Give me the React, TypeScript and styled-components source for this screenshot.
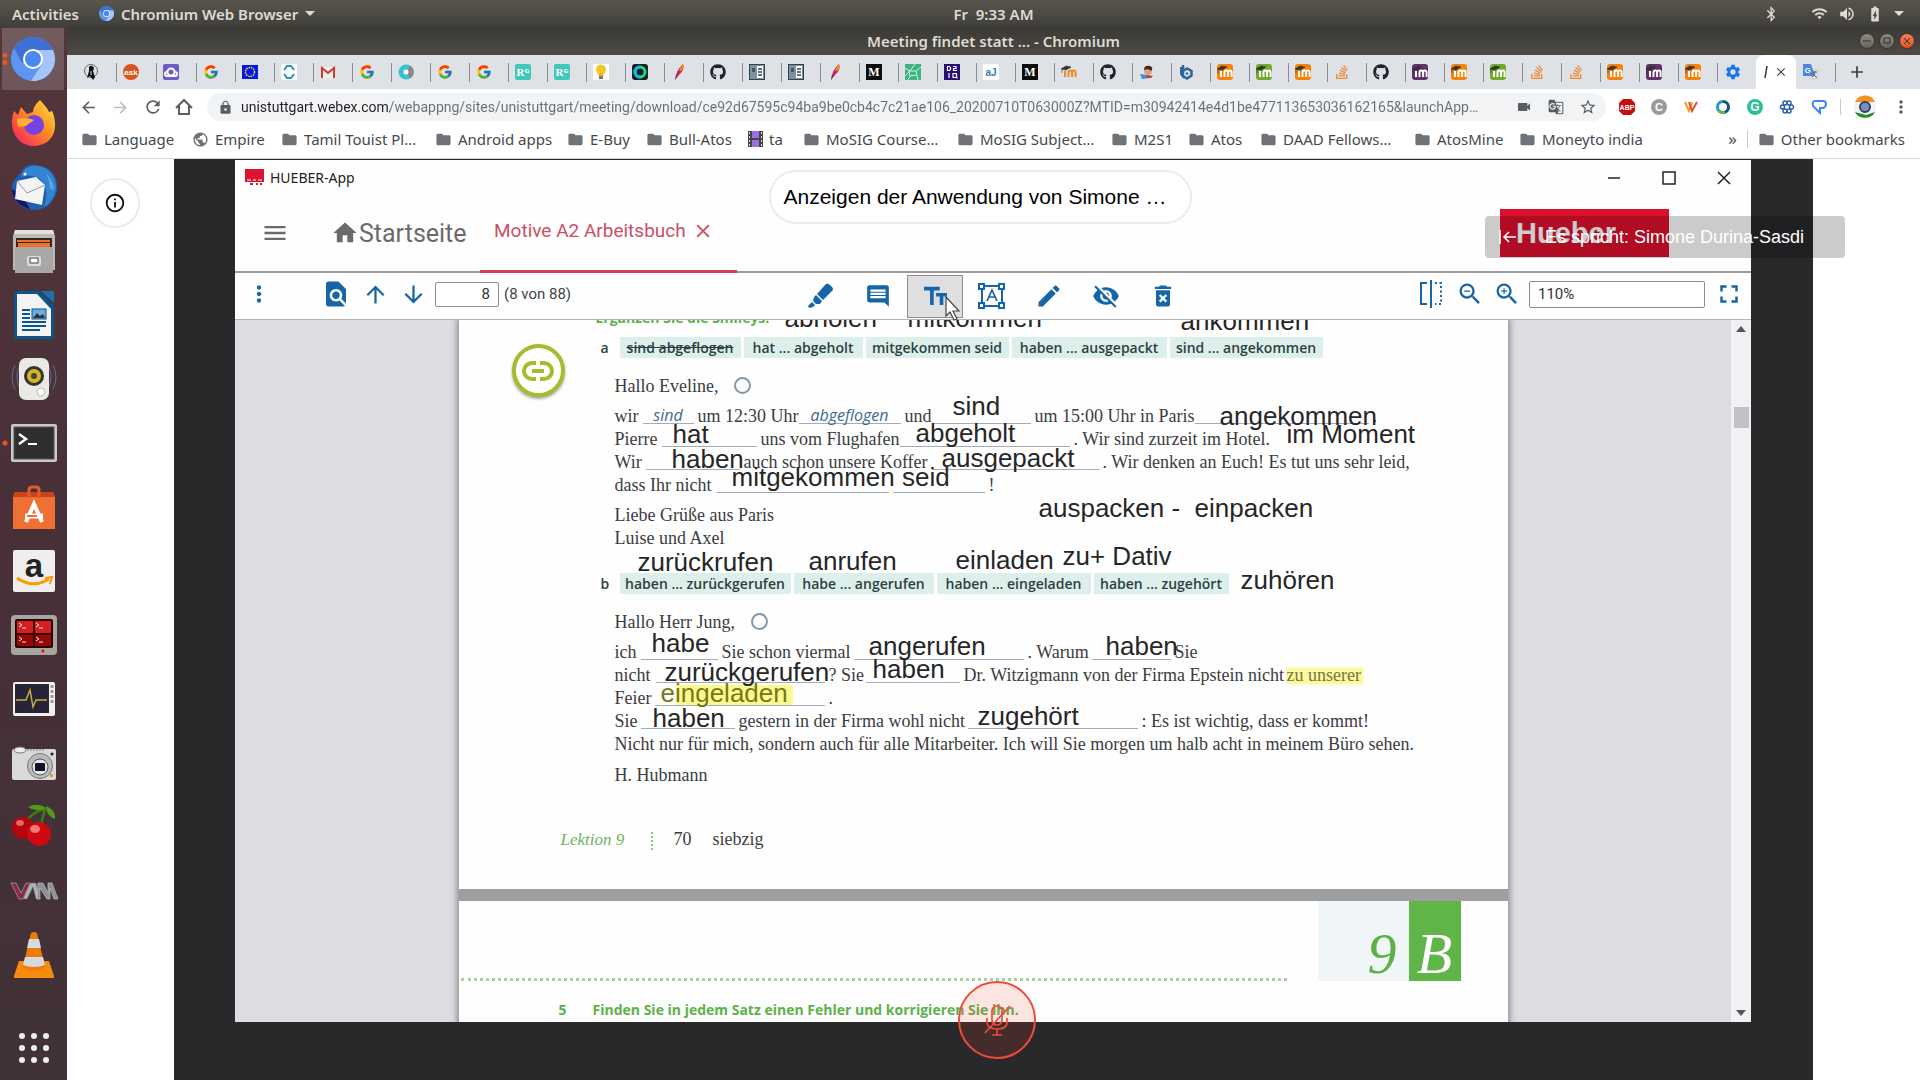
import React from 'react';
import styled, { createGlobalStyle, css } from 'styled-components';
import { FcGoogle } from 'react-icons/fc';
import { FaGithub, FaStackOverflow, FaBluetoothB } from 'react-icons/fa';
import {
  MdTextFields, MdEdit, MdVisibilityOff, MdDeleteForever, MdFindInPage, MdArrowUpward,
  MdArrowDownward, MdZoomIn, MdZoomOut, MdFullscreen, MdMenu, MdHome, MdMoreVert, MdClose, MdFolder,
  MdPublic, MdLock, MdVideocam, MdGTranslate, MdStarBorder, MdSettings, MdAdd, MdArrowBack,
  MdArrowForward, MdRefresh, MdWifi, MdVolumeUp, MdBatteryChargingFull, MdInfoOutline,
} from 'react-icons/md';

const ui = '"Noto Sans", "Open Sans", sans-serif';
const arial = '"Liberation Sans", Arial, sans-serif';
const serif = '"Liberation Serif", "Times New Roman", serif';
const heading = '"Open Sans", "Noto Sans", sans-serif';
const blue = '#1565a8';

const Global = createGlobalStyle`
  * { box-sizing: border-box; }
  body { margin: 0; overflow: hidden; font-family: ${ui}; }
  button { border: 0; padding: 0; background: none; font: inherit; color: inherit; }
  a { color: inherit; text-decoration: none; }
  svg { display: block; flex: none; }
`;

/* ---------- desktop shell ---------- */
const Desktop = styled.div`
  display: grid;
  grid-template: 27px minmax(0, 1fr) / 67px minmax(0, 1fr);
  height: 100vh;
  background: #fff;
`;
const PanelBar = styled.header`
  grid-column: 1 / -1;
  display: grid;
  grid-template-columns: 67px 1fr auto 1fr;
  align-items: center;
  background: linear-gradient(#58554d, #403f3a);
  color: #dfdbd2;
  font-weight: 600;
  font-size: 15px;
  line-height: 20px;
`;
const PanelLeft = styled.div`
  grid-column: 1 / 3;
  display: flex;
  align-items: center;
  gap: 20px;
  padding-left: 12px;
`;
const AppMenu = styled.button`
  display: flex;
  align-items: center;
  gap: 7px;
`;
const Clock = styled.time`
  white-space: pre;
`;
const PanelRight = styled.div`
  display: flex;
  justify-content: flex-end;
  align-items: center;
  gap: 10px;
  padding-right: 16px;
`;
const Bluetooth = styled(FaBluetoothB)`
  margin-right: 22px;
`;
const Dock = styled.nav`
  display: flex;
  flex-direction: column;
  background: linear-gradient(#53363a, #482f38 50%, #403236);
`;
const DockItem = styled.button<{ $active?: boolean; $dots?: number }>`
  position: relative;
  display: flex;
  align-items: center;
  justify-content: center;
  height: 64px;
  ${p => p.$active && css`
    background: linear-gradient(#735b5f, #6d5559) content-box;
    padding: 1px 3px 1px 2px;
  `}
  ${p => p.$dots && css`
    &::before {
      content: '';
      position: absolute;
      left: 2px;
      width: 6px;
      height: ${p.$dots * 8 - 2}px;
      background: radial-gradient(circle, #e95420 2px, transparent 3px) 0 0 / 6px ${p.$dots > 1 ? 7 : 6}px;
    }
  `}
`;
const AppsButton = styled(DockItem)`
  margin-top: auto;
`;

/* ---------- browser ---------- */
const Browser = styled.div`
  display: flex;
  flex-direction: column;
  min-width: 0;
  min-height: 0;
`;
const TitleBar = styled.div`
  display: grid;
  grid-template-columns: 1fr auto 1fr;
  align-items: center;
  height: 28px;
  background: linear-gradient(#3a3935, #4c4a43);
  color: #dfdbd2;
  font-weight: 600;
  font-size: 15px;
  line-height: 20px;
`;
const WinButtons = styled.div`
  grid-column: 3;
  display: flex;
  justify-content: flex-end;
  gap: 4px;
  padding-right: 5px;
`;
const WinButton = styled.button<{ $close?: boolean }>`
  display: grid;
  place-items: center;
  width: 16px;
  height: 16px;
  border: 1px solid #35342f;
  border-radius: 50%;
  background: ${p => (p.$close ? 'linear-gradient(#f57f58, #e04f22)' : 'linear-gradient(#8b8980, #66645c)')};
  color: #35342f;
`;
const TabStrip = styled.div`
  display: flex;
  height: 34px;
  padding-left: 9px;
  background: #dee1e6;
`;
const Tab = styled.button<{ $wide?: boolean; $first?: boolean }>`
  display: flex;
  align-items: center;
  flex: 0 0 ${p => (p.$wide ? 40 : 39)}px;
  padding-left: 7px;
  background: ${p => (p.$first ? 'none' : 'linear-gradient(#8a8d91, #8a8d91) 0 50% / 1px 19px no-repeat')};
`;
const ActiveTab = styled.div`
  display: flex;
  align-items: center;
  justify-content: center;
  gap: 6px;
  flex: 0 0 40px;
  border-radius: 8px 8px 0 0;
  background: #fff;
  color: #3c4043;
`;
const NewTab = styled.button`
  display: grid;
  place-items: center;
  width: 44px;
  color: #3c4043;
  background: linear-gradient(#8a8d91, #8a8d91) 0 50% / 1px 19px no-repeat;
`;
const Toolbar = styled.div`
  display: flex;
  align-items: center;
  height: 36px;
  padding: 0 11px 0 12px;
  color: #5a5d61;
`;
const NavButtons = styled.div`
  display: flex;
  gap: 14px;
  margin-right: 14px;
  flex: none;
`;
const IconBtn = styled.button<{ $dim?: boolean }>`
  display: grid;
  place-items: center;
  width: 18px;
  height: 24px;
  flex: none;
  color: ${p => (p.$dim ? '#bcbec1' : 'inherit')};
`;
const Omnibox = styled.div`
  display: flex;
  align-items: center;
  flex: 1;
  gap: 14px;
  min-width: 0;
  height: 28px;
  padding: 0 9px 0 11px;
  border-radius: 14px;
  background: #f1f3f4;
`;
const UrlInput = styled.input`
  flex: 1;
  min-width: 0;
  margin-left: -6px;
  padding: 0;
  border: 0;
  outline: 0;
  font: 14px Roboto, sans-serif;
  color: #6b6e72;
  background: linear-gradient(90deg, #202124 149px, #6b6e72 149px);
  -webkit-background-clip: text;
  background-clip: text;
  -webkit-text-fill-color: transparent;
  text-overflow: ellipsis;
`;
const Extensions = styled.div`
  display: flex;
  align-items: center;
  gap: 14px;
  margin-left: 12px;
  flex: none;
`;
const ExtSep = styled.span`
  width: 1px;
  height: 16px;
  margin: 0 -2px;
  background: #c8cacd;
`;
const Bookmarks = styled.nav`
  display: flex;
  align-items: center;
  height: 34px;
  padding: 0 15px 5px 14px;
  border-bottom: 1px solid #d5d7da;
  color: #45484c;
  font-size: 15px;
  line-height: 20px;
`;
const Bookmark = styled.a<{ $w?: number }>`
  display: flex;
  align-items: center;
  gap: 6px;
  flex: 0 0 ${p => (p.$w ? p.$w + 'px' : 'auto')};
  white-space: nowrap;
`;
const Overflow = styled.button`
  margin-left: auto;
  padding-right: 10px;
  margin-right: 10px;
  border-right: 1px solid #c8cacd;
  line-height: 18px;
  font-size: 17px;
`;

/* ---------- meeting stage ---------- */
const Meeting = styled.main`
  position: relative;
  display: flex;
  flex: 1;
  min-height: 0;
  padding: 0 107px;
  background: #fff;
`;
const Stage = styled.section`
  display: flex;
  flex: 1;
  min-width: 0;
  padding: 1px 62px 58px 61px;
  background: #29282b;
`;
const InfoButton = styled.button`
  position: absolute;
  left: 23px;
  top: 19px;
  display: grid;
  place-items: center;
  width: 50px;
  height: 50px;
  border: 2px solid #ebebeb;
  border-radius: 50%;
  color: #111;
`;
const SharePill = styled.div`
  position: absolute;
  left: calc(50% - 225px);
  top: 11px;
  display: flex;
  align-items: center;
  width: 423px;
  height: 54px;
  padding-left: 13px;
  border: 2px solid #ebebeb;
  border-radius: 27px;
  background: #fff;
  color: #000;
  font: 21px ${arial};
  white-space: nowrap;
`;
const Speaker = styled.div`
  position: absolute;
  right: 75px;
  top: 57px;
  display: flex;
  align-items: center;
  gap: 28px;
  width: 360px;
  height: 42px;
  padding-left: 14px;
  border-radius: 4px;
  background: rgba(0, 0, 0, 0.2);
  color: #fff;
  font: 18px ${arial};
  white-space: nowrap;
`;
const MicButton = styled.button`
  position: absolute;
  left: calc(50% - 36px);
  bottom: 21px;
  display: grid;
  place-items: center;
  width: 78px;
  height: 78px;
  border: 2px solid #ee4b3b;
  border-radius: 50%;
  background: rgba(240, 72, 50, 0.14);
  color: #ee4b3b;
`;

/* ---------- shared application ---------- */
const AppWindow = styled.div`
  display: flex;
  flex-direction: column;
  flex: 1;
  min-width: 0;
  background: #fefefe;
`;
const AppTitle = styled.div`
  display: flex;
  align-items: center;
  gap: 6px;
  height: 35px;
  padding: 0 20px 0 10px;
  color: #222;
  font-size: 14px;
`;
const AppWinControls = styled.div`
  display: flex;
  gap: 41px;
  margin-left: auto;
`;
const AppNav = styled.div`
  display: flex;
  align-items: stretch;
  height: 78px;
  padding: 0 82px 0 26px;
  border-bottom: 2px solid #9b9b9e;
  color: #6a6a6c;
  font-family: Roboto, sans-serif;
`;
const MenuBtn = styled.button`
  display: flex;
  align-items: center;
  margin-right: 42px;
`;
const HomeLink = styled.a`
  display: flex;
  align-items: center;
  width: 149px;
  font-size: 25px;
`;
const DocTab = styled.div`
  display: flex;
  align-items: center;
  gap: 6px;
  width: 257px;
  margin-bottom: -2px;
  padding: 0 0 4px 14px;
  border-bottom: 3px solid #c83f58;
  color: #cb4f66;
  font-size: 19px;
  white-space: nowrap;
`;
const HueberLogo = styled.div`
  align-self: flex-start;
  width: 169px;
  height: 48px;
  margin: 14px 0 0 auto;
  padding-left: 16px;
  background: #dc0f2c;
  color: #fff;
  font: bold 29px/48px ${arial};
`;
const DocToolbar = styled.div`
  display: grid;
  grid-template-columns: 572px auto 1fr;
  align-items: center;
  height: 47px;
  border-bottom: 1px solid #b4b4b6;
  color: ${blue};
`;
const PagerTools = styled.div`
  display: flex;
  align-items: center;
  padding: 0 0 4px 11px;
  gap: 11px;
`;
const PagerMore = styled.button`
  margin-right: 38px;
`;
const PageInput = styled.input`
  width: 64px;
  height: 25px;
  margin-left: -3px;
  padding: 0 8px;
  border: 1px solid #8d8d90;
  border-radius: 2px;
  background: #fff;
  color: #333;
  font: 15px Roboto, sans-serif;
  text-align: right;
`;
const PageLabel = styled.label`
  margin-left: -6px;
  color: #444;
  font: 15px Roboto, sans-serif;
`;
const MarkTools = styled.div`
  display: flex;
  margin-left: -14px;
  gap: 1px;
`;
const MarkBtn = styled.button<{ $on?: boolean }>`
  position: relative;
  display: grid;
  place-items: center;
  width: 56px;
  height: 43px;
  border: 1px solid ${p => (p.$on ? '#8e8e91' : 'transparent')};
  background: ${p => (p.$on ? '#dfdee1' : 'none')};
`;
const Cursor = styled.svg`
  position: absolute;
  z-index: 3;
  left: 37px;
  top: 20px;
`;
const ViewTools = styled.div`
  display: flex;
  justify-content: flex-end;
  align-items: center;
  gap: 9px;
  padding: 0 7px 4px 0;
`;
const CompareBtn = styled.button`
  margin-right: 4px;
`;
const ZoomInput = styled.input`
  width: 176px;
  height: 27px;
  margin-left: -1px;
  padding: 0 8px;
  border: 1px solid #8d8d90;
  border-radius: 2px;
  background: #fff;
  color: #333;
  font: 15px Roboto, sans-serif;
`;
const Viewer = styled.div`
  display: flex;
  flex: 1;
  min-height: 0;
  background: #dddce0;
`;
const Pages = styled.div`
  display: flex;
  flex-direction: column;
  flex: 1;
  min-width: 0;
  overflow: hidden;
  align-items: center;
`;
const Sheets = styled.div`
  display: flex;
  flex-direction: column;
  gap: 12px;
  width: 1049px;
  flex: none;
  background: #9f9ea1;
  box-shadow: 0 0 6px 2px #8c8b90;
`;
const Scrollbar = styled.div`
  display: flex;
  flex-direction: column;
  align-items: center;
  width: 20px;
  padding: 6px 0;
  background: #f1f0f3;
  color: #555;
`;
const Thumb = styled.div`
  width: 15px;
  height: 21px;
  margin: 75px 0 auto;
  background: #c1c0c4;
`;
const Sheet = styled.article`
  position: relative;
  background: #fefefe;
  color: #3c3c40;
  font: 18px/23px ${serif};
  overflow: hidden;
`;
const FirstSheet = styled(Sheet)`
  height: 569px;
  padding-left: 156px;
`;
const Task = styled.h2`
  margin: -14px 0 8px -19px;
  color: #5db149;
  font: bold 14px/23px ${heading};
`;
const WordBank = styled.div`
  display: flex;
  gap: 3px;
  margin: 0 0 17px -14px;
  font: 600 14px/21px ${heading};
  color: #2e3f42;
`;
const BankKey = styled.span`
  flex: 0 0 16px;
`;
const Chip = styled.span<{ $w: number; $done?: boolean }>`
  flex: 0 0 ${p => p.$w}px;
  text-align: center;
  background: #dcefeb;
  white-space: nowrap;
  text-decoration: ${p => (p.$done ? 'line-through' : 'none')};
`;
const Line = styled.p<{ $after?: number }>`
  display: flex;
  height: 23px;
  margin: 0 0 ${p => p.$after || 0}px;
  white-space: nowrap;
`;
const Text = styled.span<{ $w?: number }>`
  flex: 0 0 ${p => (p.$w ? p.$w + 'px' : 'auto')};
`;
const Blank = styled.span<{ $w: number }>`
  flex: 0 0 ${p => p.$w - 4}px;
  height: 19px;
  margin-right: 4px;
  border-bottom: 1px solid #a5abbd;
  color: #3d6c90;
  text-align: center;
  font: italic 16px/20px "Open Sans", sans-serif;
`;
const Smiley = styled.span`
  width: 17px;
  height: 17px;
  margin: 2px 0 0 16px;
  border: 2px solid #8499a8;
  border-radius: 50%;
`;
const Marked = styled.mark`
  height: 16px;
  margin-top: 4px;
  line-height: 15px;
  padding-right: 2px;
  background: #fbf8a0;
  color: #77763a;
  box-shadow: 0 0 3px #fbf8a0;
`;
const Note = styled.span<{ $x: number; $y: number; $marked?: boolean }>`
  position: absolute;
  left: ${p => p.$x}px;
  top: ${p => p.$y}px;
  font: 26px/30px ${arial};
  white-space: pre;
  color: ${p => (p.$marked ? '#77771b' : '#262628')};
  ${p => p.$marked && css`
    padding-right: 6px;
    background: linear-gradient(90deg, transparent 12px, #fbfa8f 18px) 0 7px / 132px 20px no-repeat;
  `}
`;
const LinkBadge = styled.button`
  position: absolute;
  left: 53px;
  top: 24px;
  display: grid;
  place-items: center;
  width: 53px;
  height: 53px;
  border: 4px solid #a7bb2c;
  border-radius: 50%;
  background: #fff;
  color: #a7bb2c;
  box-shadow: 0 2px 3px rgba(0, 0, 0, 0.35);
`;
const SheetFooter = styled.footer`
  display: flex;
  gap: 21px;
  margin: 41px 0 0 -54px;
`;
const Lesson = styled.em`
  width: 69px;
  color: #6db35c;
  font-size: 17px;
`;
const DotRule = styled.span`
  height: 18px;
  margin-top: 4px;
  border-left: 2px dotted #8cc57e;
`;
const SecondSheet = styled(Sheet)`
  padding: 0 47px 0 2px;
  height: 240px;
`;
const SheetHead = styled.div`
  display: flex;
  justify-content: space-between;
  align-items: flex-end;
`;
const HeadRule = styled.span`
  width: 826px;
  border-bottom: 3px dotted #a6d29b;
`;
const UnitTabs = styled.div`
  display: flex;
  height: 80px;
  font: italic 58px/106px ${serif};
`;
const UnitNumber = styled.span`
  width: 91px;
  padding-right: 12px;
  background: #f0f6f7;
  color: #5db149;
  text-align: right;
`;
const UnitLetter = styled.span`
  width: 52px;
  background: #5fb548;
  color: #fff;
  text-align: center;
`;
const Exercise = styled.h2`
  display: flex;
  gap: 26px;
  margin: 17px 0 0 98px;
  color: #5db149;
  font: bold 14px/23px ${heading};
`;

/* ---------- drawings ---------- */
const Chromium = ({ s }: { s: number }) => (
  <svg width={s} height={s} viewBox="0 0 44 44">
    <circle cx="22" cy="22" r="22" fill="#5d96f2" />
    <path d="M3 11A22 22 0 0 1 41 11L42 13H22L11 26Z" fill="#3f70d3" />
    <path d="M42 13A22 22 0 0 1 20 44L31 27 26 13Z" fill="#a4c4fa" />
    <circle cx="22" cy="22" r="10" fill="#fff" />
    <circle cx="22" cy="22" r="8" fill="#4a88f0" />
  </svg>
);
const Firefox = () => (
  <svg width="46" height="46" viewBox="0 0 46 46">
    <defs><linearGradient id="ff" x1="1" y1="0" x2="0" y2="1"><stop offset="0" stopColor="#fff04a" /><stop offset=".45" stopColor="#ff8a1f" /><stop offset="1" stopColor="#f2126e" /></linearGradient></defs>
    <path d="M29 0c3 4 7 7 9 12l3-1c6 12 5 34-18 35C4 46-3 26 3 11l4 4 3-8 6 7 6-2C22 7 26 3 29 0Z" fill="url(#ff)" />
    <circle cx="23" cy="25" r="10" fill="#7542e5" />
    <path d="M6 19c6-2 12-1 17 1-3 3-5 3-8 6l-8 1Z" fill="#ffb02e" />
  </svg>
);
const Thunderbird = () => (
  <svg width="48" height="48" viewBox="0 0 48 48">
    <path d="M12 8C16 1 24 1 29 3c12 1 19 11 18 23-1 11-9 19-19 21C14 48 3 40 2 28c-1-6 1-10 4-13Z" fill="#1d5fae" />
    <path d="M2 26C2 36 10 44 20 46L12 32Z" fill="#1b1464" />
    <path d="M11 14C14 3 22 2 28 3c11 1 19 11 18 23-2 9-6 15-12 18 3-8 4-20-3-27-6-5-12-5-20-3Z" fill="#3384d3" />
    <path d="M36 10q8 8 8 18l-4-3q-1-9-4-15Z" fill="#57a7e8" />
    <path d="M7 18 26 14 35 22 32 42 5 36Z" fill="#f4f4f4" />
    <path d="M7 18 17 30 35 22" fill="none" stroke="#999" />
    <circle cx="15" cy="11" r="1.500" fill="#fff" />
  </svg>
);
const Files = () => (
  <svg width="42" height="44" viewBox="0 0 42 44">
    <path d="M2 1h38l2 6v34H0V7Z" fill="#b9b9b7" /><path d="M2 1h38l1 4H1Z" fill="#e2e2df" />
    <path d="M3 9h36v9H3Z" fill="#3a2418" /><path d="M4 11h33v2H4Zm1 3h32v4H5Z" fill="#e8742c" />
    <path d="M2 18h38v26H2Z" fill="#a8a8a6" /><rect x="14" y="27" width="14" height="10" rx="2" fill="#ddd" /><rect x="17" y="29" width="8" height="5" fill="#fff" stroke="#444" />
  </svg>
);
const Writer = () => (
  <svg width="40" height="48" viewBox="0 0 40 48">
    <path d="M3 0h23l14 15v30a3 3 0 0 1-3 3H3a3 3 0 0 1-3-3V3a3 3 0 0 1 3-3Z" fill="#0d5489" />
    <path d="M27 0h13v12Z" fill="#1a73ab" /><path d="M3 3h20l14 15v27H3Z" fill="#f3f3f3" />
    <path d="M8 18h8v2H8Zm0 4h8v2H8Zm0 4h8v2H8Zm0 4h24v2H8Zm0 4h24v2H8Zm0 4h18v2H8Z" fill="#0d5489" />
    <rect x="18" y="18" width="14" height="10" fill="#65aede" stroke="#0d5489" /><path d="m19 27 4-5 3 3 3-2 2 4Z" fill="#333" />
  </svg>
);
const Speakerbox = () => (
  <svg width="48" height="44" viewBox="0 0 48 44">
    <path d="M5 8q-6 12 0 24M43 8q6 12 0 24M9 10q-4 10 0 20M39 10q4 10 0 20" stroke="#5b6f99" fill="none" />
    <rect x="9" y="1" width="30" height="42" rx="7" fill="#e9e9e6" /><circle cx="24" cy="19" r="10" fill="#333" />
    <circle cx="24" cy="19" r="7" fill="#d6b523" /><circle cx="24" cy="19" r="3" fill="#444" /><circle cx="31" cy="35" r="4" fill="#fff" stroke="#bbb" />
  </svg>
);
const Terminal = () => (
  <svg width="46" height="38" viewBox="0 0 46 38">
    <rect width="46" height="38" rx="2" fill="#c9c9c7" /><rect x="3" y="3" width="40" height="32" fill="#2e2f2e" stroke="#555" />
    <path d="m8 10 7 5-7 5" stroke="#fff" strokeWidth="2.5" fill="none" /><path d="M17 20h9" stroke="#fff" strokeWidth="2" />
  </svg>
);
const Software = () => (
  <svg width="42" height="44" viewBox="0 0 42 44">
    <path d="M2 7h38l2 5v32H0V12Z" fill="#ee7035" /><path d="M0 12 2 7h38l2 5Z" fill="#c8441b" />
    <path d="M16 13V5q0-3 3-3h4q3 0 3 3v8" stroke="#e35b28" strokeWidth="3" fill="none" />
    <path d="m13 37 8-18 8 18" stroke="#fff" strokeWidth="4" fill="none" /><path d="M12 31h18" stroke="#fff" strokeWidth="5" /><path d="M14 31h10" stroke="#ee7035" strokeWidth="2" />
  </svg>
);
const Amazon = () => (
  <svg width="42" height="42" viewBox="0 0 42 42">
    <rect width="42" height="42" rx="2" fill="#eee" /><text x="21" y="27" fontFamily="Liberation Sans" fontWeight="bold" fontSize="33" fill="#222" textAnchor="middle">a</text>
    <path d="M4 28q16 11 32 1" stroke="#f90" strokeWidth="3" fill="none" /><path d="m32 28 7-1-2 7" stroke="#f90" strokeWidth="2" fill="none" />
  </svg>
);
const Terminator = () => (
  <svg width="46" height="40" viewBox="0 0 46 40">
    <rect width="46" height="40" rx="4" fill="#a4a69f" /><rect x="4" y="4" width="38" height="29" rx="2" fill="#300" />
    <path d="M6 6h16v12H6Zm18 0h16v12H24Z" fill="#d41f1f" /><path d="M6 20h16v11H6Zm18 0h16v11H24Z" fill="#960808" />
    <path d="m8 8 3 2-3 2m3 1h4m10-5 3 2-3 2m3 1h4M8 22l3 2-3 2m3 1h4m10-5 3 2-3 2m3 1h4" stroke="#fdd" fill="none" /><circle cx="32" cy="36" r="1.5" fill="red" />
  </svg>
);
const Monitor = () => (
  <svg width="42" height="34" viewBox="0 0 42 34">
    <rect width="42" height="34" rx="2" fill="#f1f1ee" /><rect x="2" y="2" width="34" height="29" fill="#27243a" />
    <path d="M3 18h10l4-10 3 17 3-7h11" stroke="#c9ad3d" strokeWidth="1.5" fill="none" />
    <path d="M39 3v18" stroke="#999" strokeWidth="3" strokeDasharray="3 2" />
  </svg>
);
const Camera = () => (
  <svg width="44" height="34" viewBox="0 0 44 34">
    <rect y="3" width="44" height="31" rx="2" fill="#d9d9d7" /><ellipse cx="8" cy="4" rx="6" ry="3" fill="#eee" stroke="#777" />
    <path d="M15 4h17" stroke="#777" strokeDasharray="2 1" />
    <circle cx="28" cy="20" r="12.500" fill="#bbb" stroke="#777" /><circle cx="28" cy="21" r="8" fill="#e6e6e6" stroke="#555" /><rect x="23" y="17" width="10" height="8" rx="1" fill="#10142b" />
    <circle cx="40" cy="8" r="1.500" fill="#222" /><rect x="38" y="28" width="3" height="3" fill="#e69a2a" />
  </svg>
);
const Cherries = () => (
  <svg width="44" height="46" viewBox="0 0 44 46">
    <path d="M14 18Q20 8 33 5L28 24" stroke="#3f7d10" strokeWidth="2.500" fill="none" />
    <path d="M16 3q10-5 18 1-10 5-18-1ZM34 2q10 4 9 13-9-3-9-13Z" fill="#4f9c14" />
    <circle cx="11" cy="24" r="11" fill="#b3060c" /><circle cx="27" cy="30" r="12" fill="#cc0a10" /><ellipse cx="23" cy="25" rx="5" ry="4" fill="#f07a70" /><ellipse cx="8" cy="19" rx="4" ry="3" fill="#e8635c" />
  </svg>
);
const Vmm = () => (
  <svg width="48" height="18" viewBox="0 0 48 18">
    <path d="M1 1h5l5 10L16 1h4l-7 16H9Z" fill="#8a2846" stroke="#aaa" strokeWidth=".7" />
    <path d="M20 1 13 17h4L23 5l3 12h4L26 1Z" fill="#aeb2b4" stroke="#666" strokeWidth=".6" />
    <path d="M28 1h5l5 10V1h4l6 16h-4L40 6v11h-3L30 6v11h-3Z" fill="#8b9194" stroke="#ccc" strokeWidth=".6" />
  </svg>
);
const Cone = () => (
  <svg width="40" height="46" viewBox="0 0 40 46">
    <path d="m5 29h30l5 15v2H0v-2Z" fill="#f58c0c" /><path d="m17 1q3-2 6 0l8 34q-11 8-22 0Z" fill="#f07c08" />
    <path d="m15 7h10l2 9H13ZM11 25h18l2 8q-11 4-22 0Z" fill="#d7dbdd" />
  </svg>
);
const AppsGrid = () => (
  <svg width="32" height="32" viewBox="0 0 32 32" fill="#efeeee">
    {[4, 16, 28].map(y => [4, 16, 28].map(x => <circle key={x + '-' + y} cx={x} cy={y} r="3" />))}
  </svg>
);

type FavProps = { bg: string; fg?: string; t?: string; fs?: number; r?: number; ff?: string };
const Fav = ({ bg, fg = '#fff', t = '', fs = 12, r = 2, ff = 'Liberation Sans' }: FavProps) => (
  <svg width="16" height="16" viewBox="0 0 16 16">
    <rect width="16" height="16" rx={r} fill={bg} />
    <text x="8" y={8 + fs * 0.36} fontSize={fs} fontWeight="bold" fontFamily={ff} fill={fg} textAnchor="middle">{t}</text>
  </svg>
);
const Moodle = ({ bg, fg = '#fff' }: { bg: string; fg?: string }) => (
  <svg width="16" height="16" viewBox="0 0 16 16">
    <rect width="16" height="16" rx="3" fill={bg} />
    <path d="M4 13V7M7.500 13V8.500q0-2 1.800-2t1.800 2V13M11 8.500q0-2 1.800-2t1.800 2V13" stroke={fg} strokeWidth="2" fill="none" />
    <path d="M0 5 5 2l5 1-5 3ZM1 5v4" fill="#333" stroke="#333" strokeWidth=".6" />
  </svg>
);
const Feather = () => (
  <svg width="16" height="16" viewBox="0 0 16 16"><path d="M12 0Q14 6 8 11L4 16Q5 6 12 0Z" fill="#c92455" /><path d="M12 0Q14 4 10 7L8 7Q9 3 12 0Z" fill="#f08a1d" /><path d="m7 11-3 5 1-5Z" fill="#7b2e8a" /></svg>
);
const DocFav = () => (
  <svg width="16" height="16" viewBox="0 0 16 16"><rect x=".5" y=".5" width="15" height="15" fill="#7c929e" stroke="#35424a" /><path d="M8 2h6v12H8Z" fill="#fff" /><path d="M9 5h4M9 8h4M9 11h4M3 5h3M3 7h3" stroke="#35424a" strokeWidth="1.500" /></svg>
);
const Penguin = () => (
  <svg width="16" height="16" viewBox="0 0 16 16"><circle cx="8" cy="7" r="6.500" fill="none" stroke="#666" /><path d="M6 3q3-3 5 1l-1 3 2 6-2 3-3-4-3 2 2-7Z" fill="#111" /><path d="M8 7v4" stroke="#ddd" /></svg>
);
const EuFlag = () => (
  <svg width="16" height="16" viewBox="0 0 16 16"><rect y="1" width="16" height="14" fill="#0717e8" /><circle cx="8" cy="8" r="4.500" fill="none" stroke="#f7e017" strokeWidth="1.500" strokeDasharray="1.500 .9" /></svg>
);
const Diamond = () => (
  <svg width="16" height="16" viewBox="0 0 16 16"><rect width="16" height="16" rx="2" fill="#fff" /><path d="M3 6 6 2h4l3 4M3 10l3 4h4l3-4" fill="none" stroke="#2b93b8" strokeWidth="2" /></svg>
);
const Gmail = () => (
  <svg width="16" height="16" viewBox="0 0 16 16"><path d="M1 3h14v11H1Z" fill="#eee" /><path d="M2 14V4l6 5 6-5v10" stroke="#d3392d" strokeWidth="2" fill="none" /></svg>
);
const Teal = () => (
  <svg width="16" height="16" viewBox="0 0 16 16"><circle cx="8" cy="8" r="7.500" fill="#35c3cf" /><path d="M8 8 12 1.500a7.500 7.500 0 0 1 0 13Z" fill="#8c8583" /><circle cx="8" cy="8" r="2.500" fill="#fff" /></svg>
);
const Bulb = () => (
  <svg width="16" height="16" viewBox="0 0 16 16"><rect width="16" height="16" fill="#fff" /><circle cx="8" cy="5.500" r="5" fill="#f8c822" /><path d="M5.500 9h5v3h-5Z" fill="#f0b51e" /><path d="M6 12h4v3H6Z" fill="#777" /></svg>
);
const Ring = () => (
  <svg width="16" height="16" viewBox="0 0 16 16"><rect width="16" height="16" rx="3" fill="#15232a" /><circle cx="8" cy="8" r="5" fill="none" stroke="#25d67d" strokeWidth="3" /><path d="M8 3a5 5 0 0 0 0 10" fill="none" stroke="#18b7e8" strokeWidth="3" /></svg>
);
const GreenNet = () => (
  <svg width="16" height="16" viewBox="0 0 16 16"><rect width="16" height="16" fill="#3cb482" /><path d="m0 4 5 3 5-7M5 7l-5 5m5-5h6l5-4M11 7l2 9m-2-5-6 1-2 4m2-4-1-5" stroke="#d5f0e3" fill="none" /></svg>
);
const D2iq = () => (
  <svg width="16" height="16" viewBox="0 0 16 16"><rect width="16" height="16" fill="#2a0f70" /><path d="M3.500 2.500h2l1 1v2l-1 1h-2ZM9 2.500h3v2H9.500v2H13M5 9v5M9 9.500h3.500v4H9Zm3 3 1.500 2" fill="none" stroke="#fff" strokeWidth="1.200" /></svg>
);
const Hexagon = () => (
  <svg width="16" height="16" viewBox="0 0 16 16"><path d="M5 1v11l4 2.500 4.500-3V7L9 4.500 5 7" fill="none" stroke="#2c6693" strokeWidth="2.500" /><path d="M3 3v7l3 4" fill="none" stroke="#2c6693" strokeWidth="2" /><circle cx="9" cy="9.500" r="1.200" fill="#2c6693" /></svg>
);
const Person = () => (
  <svg width="16" height="16" viewBox="0 0 16 16"><circle cx="9" cy="7" r="4" fill="#dfa47c" /><path d="M5 6q0-5 6-4 4 2 1 5-2-3-7-1Z" fill="#4a2619" /><path d="M1 10l7 1 3 3-8 1Z" fill="#3b8fd0" /><path d="m8 11 6 1-2 2H8Z" fill="#c13c2e" /></svg>
);
const Cloud = () => (
  <svg width="16" height="16" viewBox="0 0 16 16"><rect width="16" height="16" rx="2" fill="#6c5bc8" /><circle cx="8" cy="8" r="3.500" fill="none" stroke="#fff" strokeWidth="2" /><path d="M4 8a2 2 0 0 0 0 4h8a2 2 0 0 0 0-4" fill="none" stroke="#fff" strokeWidth="2" /></svg>
);
const Translate = () => (
  <svg width="16" height="16" viewBox="0 0 16 16"><rect x="6" y="5" width="10" height="11" fill="#d5d8dc" /><path d="M0 0h8l4 12H0Z" fill="#4a86e8" /><text x="1.500" y="9" fontSize="8" fontWeight="bold" fill="#fff" fontFamily="Liberation Sans">G</text><path d="M9 8h5m-2-1v1q0 3-3 5m1-3 4 4" stroke="#667" fill="none" /></svg>
);
const HighlighterIcon = () => (
  <svg width="26" height="26" viewBox="0 0 26 26" fill={blue}><path d="M18 1q2-1 4 1l2 2q2 2 0 4l-9 9-6-6Z" /><path d="m8 12 6 6-2 3H8l-3-3 1-4Z" /><path d="m4 19 3 3-2 2-4 1-1-2Z" /></svg>
);
const CommentIcon = () => (
  <svg width="26" height="26" viewBox="0 0 24 24"><path fill={blue} fillRule="evenodd" d="M4 2h16c1 0 2 1 2 2v18l-4-4H4c-1 0-2-1-2-2V4c0-1 1-2 2-2Zm1 4v2h14V6Zm0 3v2h14V9Zm0 3v2h14v-2Z" /></svg>
);
const TextBoxIcon = () => (
  <svg width="28" height="28" viewBox="0 0 28 28" fill="none" stroke={blue} strokeWidth="2"><path d="M4 4h20v20H4Z" /><path d="M1 2h5v5H1ZM21 2h5v5h-5ZM1 21h5v5H1ZM21 21h5v5h-5Z" fill="#fff" /><path d="m9 19 5-11 5 11m-8-4h6" strokeWidth="1.700" /></svg>
);
const CompareIcon = () => (
  <svg width="24" height="28" viewBox="0 0 24 28" fill="none" stroke={blue} strokeWidth="2"><path d="M8 3H2v21h6" /><path d="M12 0v28" /><path d="M16 3h6v21h-6" strokeDasharray="2 2.500" /></svg>
);
const LinkIcon = () => (
  <svg width="32" height="20" viewBox="0 0 32 20" fill="none" stroke="currentColor" strokeWidth="4"><path d="M14 2H10a8 8 0 0 0 0 16h4M18 2h4a8 8 0 0 1 0 16h-4M10 10h12" /></svg>
);
const Hueber = () => (
  <svg width="19" height="17" viewBox="0 0 19 17"><path d="M0 0h19v13H0Z" fill="#d8142f" /><path d="M2 11h4m2 0h3m2 0h4" stroke="#fff" /><path d="M5 15h3m3 0h2m2 0h2" stroke="#d8142f" strokeWidth="2" /></svg>
);
const ta = (
  <svg width="15" height="16" viewBox="0 0 15 16"><rect width="15" height="16" fill="#444" /><path d="M4 0h7v7H4ZM4 9h7v7H4Z" fill="#9a6fe0" /><path d="M1.500 1v15M13.500 1v15" stroke="#ddd" strokeDasharray="2 2" /></svg>
);

const G = <FcGoogle size={16} />;
const GH = <FaGithub size={16} color="#20242a" />;
const SO = <FaStackOverflow size={16} color="#f08a34" />;
const MO = <Moodle bg="#f5820b" />;
const MG = <Moodle bg="#73a92c" />;
const MP = <Moodle bg="#633068" />;
const RG = <Fav bg="#40c8b8" t="Rᴳ" fs={11} ff="Liberation Serif" />;
const MD = <Fav bg="#0d0d0d" t="M" r={0} ff="Liberation Serif" />;
const tabs: [string, React.ReactNode][] = [
  ['DuckDuckGo', <Penguin />], ['ask', <Fav bg="#d9531e" t="ask" fs={8} r={8} />], ['Cloud', <Cloud />], ['Google', G],
  ['EU', <EuFlag />], ['Portal', <Diamond />], ['Gmail', <Gmail />], ['Google', G], ['C', <Teal />], ['Google', G], ['Google', G],
  ['RG', RG], ['RG', RG], ['Idea', <Bulb />], ['Ring', <Ring />], ['Apache', <Feather />], ['GitHub', GH], ['Docs', <DocFav />],
  ['Docs', <DocFav />], ['Apache', <Feather />], ['Medium', MD], ['Net', <GreenNet />],
  ['D2iQ', <D2iq />], ['aJ', <Fav bg="#fff" fg="#2f7fb5" t="aJ" fs={10} />],
  ['Medium', MD], ['Moodle', <Moodle bg="none" fg="#f08a24" />], ['GitHub', GH],
  ['Person', <Person />], ['b', <Hexagon />], ['Moodle', MO], ['Moodle', MG], ['Moodle', MO],
  ['Stack Overflow', SO], ['GitHub', GH], ['Moodle', MP], ['Moodle', MO], ['Moodle', MG], ['Stack Overflow', SO],
  ['Stack Overflow', SO], ['Moodle', MO], ['Moodle', MP], ['Moodle', MO], ['Settings', <MdSettings size={18} color="#1a73e8" />],
];
const folder = <MdFolder size={17} color="#6f7377" />;
const bookmarks: [string, number, React.ReactNode?][] = [
  ['Language', 111], ['Empire', 89, <MdPublic size={17} color="#6f7377" />], ['Tamil Touist Pl…', 154], ['Android apps', 132], ['E-Buy', 79],
  ['Bull-Atos', 102], ['ta', 55, ta], ['MoSIG Course…', 154], ['MoSIG Subject…', 154], ['M2S1', 77], ['Atos', 72],
  ['DAAD Fellows…', 154], ['AtosMine', 105], ['Moneyto india', 125],
];
const dock: [string, React.ReactNode, number?][] = [
  ['Chromium', <Chromium s={44} />, 2], ['Firefox', <Firefox />], ['Thunderbird', <Thunderbird />], ['Files', <Files />],
  ['Writer', <Writer />], ['Rhythmbox', <Speakerbox />], ['Terminal', <Terminal />, 1], ['Software', <Software />],
  ['Amazon', <Amazon />], ['Terminator', <Terminator />], ['System Monitor', <Monitor />], ['Camera', <Camera />],
  ['CherryTree', <Cherries />], ['Virtual Machines', <Vmm />], ['VLC', <Cone />],
];
const notes: [string, number, number][] = [
  ['abholen', 326, -17], ['mitkommen', 449, -17], ['ankommen', 722, -14], ['sind', 494, 71], ['hat', 214, 99], ['haben', 213, 124],
  ['abgeholt', 457, 98], ['ausgepackt', 483, 123], ['angekommen', 761, 81], ['im Moment', 828, 99], ['mitgekommen seid', 273, 142],
  ['auspacken -  einpacken', 580, 173], ['zurückrufen', 179, 227], ['anrufen', 350, 226], ['einladen', 497, 225], ['zu+ Dativ', 604, 221],
  ['zuhören', 782, 245], ['habe', 193, 308], ['angerufen', 410, 311], ['haben', 647, 311], ['zurückgerufen', 206, 337],
  ['haben', 414, 334], ['haben', 194, 383], ['zugehört', 519, 381],
];

export default function App() {
  return (
    <>
      <Global />
      <Desktop>
        <PanelBar>
          <PanelLeft>
            <button>Activities</button>
            <AppMenu><Chromium s={15} />Chromium Web Browser<svg width="10" height="5" viewBox="0 0 10 5"><path d="M0 0h10L5 5Z" fill="#dfdbd2" /></svg></AppMenu>
          </PanelLeft>
          <Clock>Fr  9:33 AM</Clock>
          <PanelRight>
            <Bluetooth size={16} /><MdWifi size={17} /><MdVolumeUp size={18} /><MdBatteryChargingFull size={18} />
            <svg width="10" height="5" viewBox="0 0 10 5"><path d="M0 0h10L5 5Z" fill="#dfdbd2" /></svg>
          </PanelRight>
        </PanelBar>
        <Dock aria-label="Dock">
          {dock.map(([name, icon, dots]) => (
            <DockItem key={name} aria-label={name} $active={name === 'Chromium'} $dots={dots}>{icon}</DockItem>
          ))}
          <AppsButton aria-label="Show Applications"><AppsGrid /></AppsButton>
        </Dock>
        <Browser>
          <TitleBar>
            <span />
            <span>Meeting findet statt ... - Chromium</span>
            <WinButtons>
              <WinButton aria-label="Minimize"><svg width="8" height="8"><path d="M0 4h8" stroke="currentColor" /></svg></WinButton>
              <WinButton aria-label="Maximize"><svg width="8" height="8"><rect x="1" y="1" width="6" height="5" fill="none" stroke="currentColor" /></svg></WinButton>
              <WinButton $close aria-label="Close"><svg width="8" height="8"><path d="m1 1 6 6m0-6-6 6" stroke="currentColor" /></svg></WinButton>
            </WinButtons>
          </TitleBar>
          <TabStrip>
            {tabs.map(([name, icon], i) => (
              <Tab key={i} aria-label={name} $wide={i < 3} $first={i === 0}>{icon}</Tab>
            ))}
            <ActiveTab><svg width="4" height="12"><path d="M3 0 1 12" stroke="#333" strokeWidth="1.500" /></svg><MdClose size={14} /></ActiveTab>
            <Tab $first aria-label="Google Translate"><Translate /></Tab>
            <NewTab aria-label="New tab"><MdAdd size={20} /></NewTab>
          </TabStrip>
          <Toolbar>
            <NavButtons>
              <IconBtn aria-label="Back"><MdArrowBack size={19} /></IconBtn>
              <IconBtn aria-label="Forward" $dim><MdArrowForward size={19} /></IconBtn>
              <IconBtn aria-label="Reload"><MdRefresh size={20} /></IconBtn>
              <IconBtn aria-label="Home"><svg width="18" height="18" viewBox="0 0 18 18" fill="none" stroke="currentColor" strokeWidth="2"><path d="M1 10 9 2l8 8M4 8v8h10V8" /></svg></IconBtn>
            </NavButtons>
            <Omnibox>
              <MdLock size={15} />
              <UrlInput aria-label="Address" defaultValue="unistuttgart.webex.com/webappng/sites/unistuttgart/meeting/download/ce92d67595c94ba9be0cb4c7c21ae106_20200710T063000Z?MTID=m30942414e4d1be477113653036162165&launchApp…" />
              <IconBtn aria-label="Camera"><MdVideocam size={16} /></IconBtn>
              <IconBtn aria-label="Translate"><MdGTranslate size={16} /></IconBtn>
              <IconBtn aria-label="Bookmark"><MdStarBorder size={18} /></IconBtn>
            </Omnibox>
            <Extensions>
              <IconBtn aria-label="ABP"><svg width="18" height="18" viewBox="0 0 18 18"><path d="M5 1h8l4 4v8l-4 4H5l-4-4V5Z" fill="#c70d0d" /><text x="9" y="12" fontSize="7" fontWeight="bold" textAnchor="middle" fill="#fff" fontFamily="Liberation Sans">ABP</text></svg></IconBtn>
              <IconBtn aria-label="C"><Fav bg="#9b9b9b" t="C" r={8} fs={11} /></IconBtn>
              <IconBtn aria-label="V"><svg width="14" height="12" viewBox="0 0 14 12" fill="none" strokeWidth="2"><path d="m1 1 4 9 3-9" stroke="#f0a021" /><path d="m5 1 3 9 5-9" stroke="#e0532a" /></svg></IconBtn>
              <IconBtn aria-label="Webex"><svg width="16" height="16"><path d="M8 2.500a5.500 5.500 0 0 0 0 11" fill="none" stroke="#1d9bc9" strokeWidth="3" /><path d="M8 2.500a5.500 5.500 0 0 1 0 11" fill="none" stroke="#13527c" strokeWidth="3" /><path d="M4 12a5.500 5.500 0 0 0 6 1" fill="none" stroke="#62b84a" strokeWidth="3" /></svg></IconBtn>
              <IconBtn aria-label="Grammarly"><Fav bg="#2fbf94" t="G" r={8} fs={12} /></IconBtn>
              <IconBtn aria-label="Mesh"><svg width="16" height="16" fill="none" stroke="#2c62ab" strokeWidth="1.500"><circle cx="6" cy="4" r="2" /><circle cx="10" cy="4" r="2" /><circle cx="6" cy="12" r="2" /><circle cx="10" cy="12" r="2" /><circle cx="3.500" cy="8" r="2" /><circle cx="12.500" cy="8" r="2" /></svg></IconBtn>
              <IconBtn aria-label="Pin"><svg width="16" height="16" fill="none" stroke="#3d8bf2" strokeWidth="2"><path d="M4 2h8q3 0 3 3t-3 4H9v5L2 7q-1-5 2-5Z" /></svg></IconBtn>
              <ExtSep />
              <button aria-label="Profile"><svg width="24" height="26" viewBox="0 0 24 26"><ellipse cx="12" cy="13" rx="11" ry="12" fill="#f3f3f3" /><path d="M2 8A11 11 0 0 1 22 8Z" fill="#f2931d" /><path d="M2 18a11 10 0 0 0 20 0l-9 3Z" fill="#2b8a2b" /><circle cx="12" cy="13" r="5" fill="#7d8fb8" stroke="#35406c" strokeWidth="2" /></svg></button>
              <IconBtn aria-label="Menu"><MdMoreVert size={20} /></IconBtn>
            </Extensions>
          </Toolbar>
          <Bookmarks>
            {bookmarks.map(([name, w, icon]) => <Bookmark key={name} href="#" $w={w}>{icon || folder}{name}</Bookmark>)}
            <Overflow aria-label="More bookmarks">»</Overflow>
            <Bookmark href="#">{folder}Other bookmarks</Bookmark>
          </Bookmarks>
          <Meeting>
            <Stage>
              <AppWindow>
                <AppTitle>
                  <Hueber />HUEBER-App
                  <AppWinControls>
                    <button aria-label="Minimize app"><svg width="14" height="14"><path d="M1 7h12" stroke="#222" strokeWidth="1.500" /></svg></button>
                    <button aria-label="Maximize app"><svg width="14" height="14"><rect x="1" y="1" width="12" height="12" fill="none" stroke="#222" strokeWidth="1.500" /></svg></button>
                    <button aria-label="Close app"><svg width="14" height="14"><path d="m1 1 12 12m0-12L1 13" stroke="#222" strokeWidth="1.500" /></svg></button>
                  </AppWinControls>
                </AppTitle>
                <AppNav>
                  <MenuBtn aria-label="Open menu"><MdMenu size={28} /></MenuBtn>
                  <HomeLink href="#"><MdHome size={28} />Startseite</HomeLink>
                  <DocTab>Motive A2 Arbeitsbuch<button aria-label="Close document"><MdClose size={22} /></button></DocTab>
                  <HueberLogo>Hueber</HueberLogo>
                </AppNav>
                <DocToolbar>
                  <PagerTools>
                    <PagerMore aria-label="More"><MdMoreVert size={26} /></PagerMore>
                    <button aria-label="Search"><MdFindInPage size={30} /></button>
                    <button aria-label="Previous page"><MdArrowUpward size={27} /></button>
                    <button aria-label="Next page"><MdArrowDownward size={27} /></button>
                    <PageInput id="page" defaultValue="8" />
                    <PageLabel htmlFor="page">(8 von 88)</PageLabel>
                  </PagerTools>
                  <MarkTools>
                    <MarkBtn aria-label="Highlight"><HighlighterIcon /></MarkBtn>
                    <MarkBtn aria-label="Comment"><CommentIcon /></MarkBtn>
                    <MarkBtn $on aria-label="Text">
                      <MdTextFields size={29} />
                      <Cursor width="16" height="26" viewBox="0 0 16 26"><path d="M1 1v19l4-4 4 8 3-1-4-8h6Z" fill="#fff" stroke="#444" strokeWidth="1.200" /></Cursor>
                    </MarkBtn>
                    <MarkBtn aria-label="Text box"><TextBoxIcon /></MarkBtn>
                    <MarkBtn aria-label="Draw"><MdEdit size={28} /></MarkBtn>
                    <MarkBtn aria-label="Hide"><MdVisibilityOff size={28} /></MarkBtn>
                    <MarkBtn aria-label="Delete"><MdDeleteForever size={28} /></MarkBtn>
                  </MarkTools>
                  <ViewTools>
                    <CompareBtn aria-label="Compare"><CompareIcon /></CompareBtn>
                    <button aria-label="Zoom out"><MdZoomOut size={28} /></button>
                    <button aria-label="Zoom in"><MdZoomIn size={28} /></button>
                    <ZoomInput aria-label="Zoom" defaultValue="110%" />
                    <button aria-label="Full screen"><MdFullscreen size={30} /></button>
                  </ViewTools>
                </DocToolbar>
                <Viewer>
                  <Pages>
                    <Sheets>
                      <FirstSheet>
                        <Task>Ergänzen Sie die Smileys.</Task>
                        <WordBank>
                          <BankKey>a</BankKey>
                          <Chip $w={121} $done>sind abgeflogen</Chip><Chip $w={119}>hat ... abgeholt</Chip><Chip $w={143}>mitgekommen seid</Chip>
                          <Chip $w={155}>haben ... ausgepackt</Chip><Chip $w={153}>sind ... angekommen</Chip>
                        </WordBank>
                        <Line $after={7}>Hallo Eveline,<Smiley /></Line>
                        <Line><Text $w={28}>wir</Text><Blank $w={55}>sind</Blank><Text $w={100}>um 12:30 Uhr</Text><Blank $w={106}>abgeflogen</Blank><Text $w={28}>und</Text><Blank $w={102} /><Text $w={160}>um 15:00 Uhr in Paris</Text><Blank $w={178} /><Text>.</Text></Line>
                        <Line><Text $w={47}>Pierre</Text><Blank $w={99} /><Text $w={139}>uns vom Flughafen</Text><Blank $w={174} /><Text>. Wir sind zurzeit im Hotel.</Text></Line>
                        <Line><Text $w={31}>Wir</Text><Blank $w={98} /><Text $w={188}>auch schon unsere Koffer</Text><Blank $w={171} /><Text>. Wir denken an Euch! Es tut uns sehr leid,</Text></Line>
                        <Line $after={7}><Text $w={102}>dass Ihr nicht</Text><Blank $w={176} /><Blank $w={96} /><Text>!</Text></Line>
                        <Line>Liebe Grüße aus Paris</Line>
                        <Line $after={23}>Luise und Axel</Line>
                        <WordBank>
                          <BankKey>b</BankKey>
                          <Chip $w={171}>haben ... zurückgerufen</Chip><Chip $w={140}>habe ... angerufen</Chip><Chip $w={154}>haben ... eingeladen</Chip><Chip $w={135}>haben ... zugehört</Chip>
                        </WordBank>
                        <Line $after={7}>Hallo Herr Jung,<Smiley /></Line>
                        <Line><Text $w={26}>ich</Text><Blank $w={81} /><Text $w={132}>Sie schon viermal</Text><Blank $w={174} /><Text $w={64}>. Warum</Text><Blank $w={83} /><Text>Sie</Text></Line>
                        <Line><Text $w={41}>nicht</Text><Blank $w={173} /><Text $w={37}>? Sie</Text><Blank $w={98} /><Text $w={323}>Dr. Witzigmann von der Firma Epstein nicht</Text><Marked>zu unserer</Marked></Line>
                        <Line><Text $w={40}>Feier</Text><Blank $w={174} /><Text>.</Text></Line>
                        <Line><Text $w={26}>Sie</Text><Blank $w={98} /><Text $w={229}>gestern in der Firma wohl nicht</Text><Blank $w={174} /><Text>: Es ist wichtig, dass er kommt!</Text></Line>
                        <Line $after={8}>Nicht nur für mich, sondern auch für alle Mitarbeiter. Ich will Sie morgen um halb acht in meinem Büro sehen.</Line>
                        <Line>H. Hubmann</Line>
                        <SheetFooter><Lesson>Lektion 9</Lesson><DotRule /><span>70</span><span>siebzig</span></SheetFooter>
                        <Note $marked $x={202} $y={358}>eingeladen</Note>
                        {notes.map(([t, x, y]) => <Note key={t + x} $x={x} $y={y}>{t}</Note>)}
                        <LinkBadge aria-label="Link"><LinkIcon /></LinkBadge>
                      </FirstSheet>
                      <SecondSheet>
                        <SheetHead>
                          <HeadRule />
                          <UnitTabs><UnitNumber>9</UnitNumber><UnitLetter>B</UnitLetter></UnitTabs>
                        </SheetHead>
                        <Exercise><span>5</span><span>Finden Sie in jedem Satz einen Fehler und korrigieren Sie ihn.</span></Exercise>
                      </SecondSheet>
                    </Sheets>
                  </Pages>
                  <Scrollbar>
                    <svg width="10" height="6"><path d="M0 6h10L5 0Z" fill="currentColor" /></svg>
                    <Thumb />
                    <svg width="10" height="6"><path d="M0 0h10L5 6Z" fill="currentColor" /></svg>
                  </Scrollbar>
                </Viewer>
              </AppWindow>
            </Stage>
            <InfoButton aria-label="Meeting info"><MdInfoOutline size={22} /></InfoButton>
            <SharePill>Anzeigen der Anwendung von Simone …</SharePill>
            <Speaker>
              <svg width="18" height="14" viewBox="0 0 18 14" fill="none" stroke="#fff" strokeWidth="1.500"><path d="M1 0v14M17 7H5m5-5L5 7l5 5" /></svg>
              Es spricht: Simone Durina-Sasdi
            </Speaker>
            <MicButton aria-label="Unmute"><svg width="30" height="34" viewBox="0 0 30 34" fill="none" stroke="currentColor" strokeWidth="1.700"><rect x="10" y="3" width="10" height="19" rx="5" /><path d="M5 15v4q0 7 10 7t10-7v-4M15 26v6M10 32h10M28 3 3 30" /></svg></MicButton>
          </Meeting>
        </Browser>
      </Desktop>
    </>
  );
}
